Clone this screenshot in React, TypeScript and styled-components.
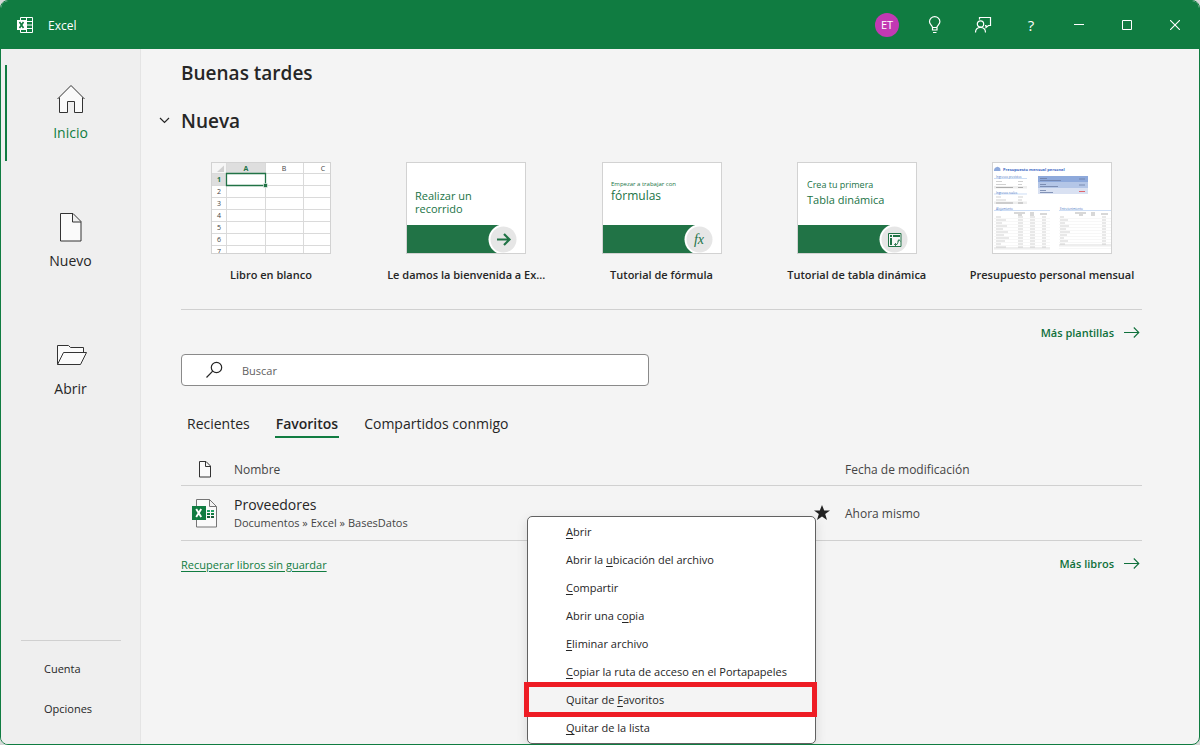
import React from "react";
import styled, { createGlobalStyle } from "styled-components";

const GlobalStyle = createGlobalStyle`
  *, *::before, *::after { box-sizing: border-box; }
  body { margin: 0; background: #d6d9d8; }
  body, button, input { font-family: "Open Sans", "Noto Sans", sans-serif; font-size: 11px; color: #262626; }
  button { border: 0; padding: 0; background: none; cursor: pointer; }
  svg { display: block; flex: none; }
`;

const green = "#107c41";
const rule = "#d0d0d0";

const Window = styled.div`
  display: flex;
  flex-direction: column;
  min-height: 100vh;
  border: 1px solid ${green};
  border-radius: 8px;
  background: #f4f4f4;
  overflow: hidden;
`;

const TitleBar = styled.header`
  display: flex;
  align-items: center;
  justify-content: space-between;
  height: 48px;
  padding-left: 16px;
  background: ${green};
  color: #fff;
  font-size: 12px;
`;

const AppName = styled.div`
  display: flex;
  align-items: center;
  gap: 15px;
`;

const TitleActions = styled.div`
  display: flex;
`;

const TitleButton = styled.button`
  display: flex;
  align-items: center;
  justify-content: center;
  width: 48px;
  height: 48px;
  color: #fff;
  font-size: 15px;
`;

const Avatar = styled.span`
  width: 24px;
  border-radius: 50%;
  background: #c239b3;
  font-size: 11px;
  line-height: 24px;
`;

const Body = styled.div`
  display: flex;
  flex: 1;
`;

const Sidebar = styled.nav`
  display: flex;
  flex-direction: column;
  justify-content: space-between;
  flex: none;
  width: 140px;
  padding: 16px 0;
  border-right: 1px solid #e4e4e4;
  background: #efefef;
`;

const NavGroup = styled.div`
  display: flex;
  flex-direction: column;
  gap: 32px;
  padding-left: 4px;
`;

const NavItem = styled.button<{ $active?: boolean }>`
  display: flex;
  flex-direction: column;
  align-items: center;
  gap: 8px;
  height: 96px;
  padding: 18px 6px 18px 0;
  border-left: 2px solid ${(p) => (p.$active ? green : "transparent")};
  color: ${(p) => (p.$active ? green : "#262626")};
  font-size: 14px;
  line-height: 20px;
`;

const FooterNav = styled.div`
  display: flex;
  flex-direction: column;
  margin: 0 19px 0 20px;
  padding-top: 7px;
  border-top: 1px solid ${rule};
`;

const FooterItem = styled.button`
  height: 40px;
  padding-left: 23px;
  text-align: left;
`;

const Main = styled.main`
  flex: 1;
  min-width: 0;
  padding: 8px 57px 0 40px;
`;

const Greeting = styled.h1`
  margin: 0;
  font-size: 19px;
  font-weight: 600;
  line-height: 32px;
`;

const SectionHead = styled.div`
  display: flex;
  align-items: center;
  gap: 10px;
  margin: 16px 0 0 -22px;
`;

const SectionTitle = styled.h2`
  margin: 0;
  font-size: 19px;
  font-weight: 600;
  line-height: 32px;
`;

const IconButton = styled.button`
  display: flex;
`;

const Templates = styled.div`
  display: flex;
  justify-content: space-between;
  padding: 25px 0;
  border-bottom: 1px solid ${rule};
`;

const TemplateCard = styled.button`
  display: flex;
  flex-direction: column;
  align-items: center;
  gap: 11px;
  width: 180px;
  height: 122px;
`;

const TemplateName = styled.span`
  font-weight: 600;
  line-height: 20px;
  white-space: nowrap;
`;

const Thumb = styled.svg`
  width: 120px;
  height: 92px;
  border: 1px solid #d2d2d2;
  background: #fff;
`;

const MoreLink = styled.a`
  display: flex;
  align-items: center;
  gap: 10px;
  color: #0f703b;
  font-weight: 600;
  line-height: 20px;
  text-decoration: none;
`;

const LinkRow = styled.div`
  display: flex;
  align-items: center;
  justify-content: flex-end;
  padding: 13px 2px 11px 0;
`;

const FooterRow = styled(LinkRow)`
  justify-content: space-between;
`;

const PlainLink = styled.a`
  color: ${green};
  text-underline-offset: 2px;
`;

const SearchBox = styled.label`
  display: flex;
  align-items: center;
  gap: 18px;
  width: 468px;
  max-width: 100%;
  height: 32px;
  padding: 0 24px;
  border: 1px solid #8a8a8a;
  border-radius: 4px;
  background: #fff;
`;

const SearchInput = styled.input`
  flex: 1;
  min-width: 0;
  padding: 0;
  border: 0;
  outline: 0;
  background: none;
  &::placeholder { color: #616161; opacity: 1; }
`;

const Tabs = styled.div`
  display: flex;
  gap: 24px;
  padding: 26px 0 14px 5px;
`;

const Tab = styled.button<{ $active?: boolean }>`
  height: 26px;
  padding: 0 1px;
  border-bottom: 2px solid ${(p) => (p.$active ? green : "transparent")};
  font-size: 14px;
  font-weight: ${(p) => (p.$active ? 600 : 400)};
  line-height: 24px;
`;

const ListArea = styled.div`
  position: relative;
`;

const FileTable = styled.table`
  width: 100%;
  table-layout: fixed;
  border-collapse: separate;
  border-spacing: 0;
`;

const HeadCell = styled.th<{ $width?: number }>`
  width: ${(p) => (p.$width ? p.$width + "px" : "auto")};
  height: 34px;
  padding: 2px 0 0;
  border-bottom: 1px solid ${rule};
  color: #444;
  font-size: 12px;
  font-weight: 400;
  text-align: left;
`;

const Cell = styled.td`
  height: 55px;
  padding: 0;
  border-bottom: 1px solid ${rule};
  color: #444;
  font-size: 12px;
`;

const NameCell = styled(Cell)`
  padding-top: 2px;
`;

const IconSlot = styled.span<{ $inset: number }>`
  display: block;
  padding-left: ${(p) => p.$inset}px;
`;

const FileName = styled.div`
  color: #262626;
  font-size: 14px;
  line-height: 18px;
`;

const FilePath = styled.div`
  font-size: 11px;
  line-height: 18px;
`;

const Menu = styled.div`
  position: absolute;
  top: 64px;
  left: 36%;
  display: flex;
  flex-direction: column;
  width: 289px;
  padding: 1px 0;
  border: 1px solid #616161;
  border-radius: 5px;
  background: #fff;
  box-shadow: 0 4px 12px rgba(0, 0, 0, 0.12);
`;

const MenuItem = styled.button<{ $marked?: boolean }>`
  position: relative;
  height: 28px;
  padding: 0 0 1px 38px;
  background: ${(p) => (p.$marked ? "#f4f4f4" : "transparent")};
  text-align: left;
  white-space: nowrap;
  u { text-underline-offset: 2px; }
  &::after {
    content: "";
    display: ${(p) => (p.$marked ? "block" : "none")};
    position: absolute;
    inset: -4px -2px -3px -4px;
    border: 5px solid #ee1c24;
  }
`;

const ExcelLogo = () => (
  <svg width="16" height="16" viewBox="0 0 16 16">
    <path d="M3.5 3V.5h12v15h-12V13M4 4.500h11.500M4 8h11.500M4 11.500h11.500M9.500.5v15" fill="none" stroke="#fff" />
    <path d="M0 3h9v10H0z" fill="#fff" />
    <path d="M2.500 5l4 6M6.500 5l-4 6" stroke={green} strokeWidth="1.600" />
  </svg>
);

const stroke = { fill: "none", stroke: "currentColor" };

const Bulb = () => (
  <svg width="14" height="18" viewBox="0 0 14 18" {...stroke} strokeWidth="1.200">
    <path d="M4.500 11.500C4.500 9.500 1.500 8.500 1.500 5.800a5.200 5.200 0 0 1 10.400 0c0 2.700-3 3.700-3 5.700zM4.500 11.500v2.500h4.500v-2.500M5 16.500h3.500" />
  </svg>
);

const Feedback = () => (
  <svg width="18" height="18" viewBox="0 0 18 18" {...stroke} strokeWidth="1.200">
    <path d="M5.500 3.500v-2h11v8h-2l-2.500 2v-2h-1" />
    <circle cx="6.500" cy="8" r="3.200" />
    <path d="M1.500 16.500c0-3 2-5.200 5-5.200s5 2.200 5 5.200" />
  </svg>
);

const HomeIcon = () => (
  <svg width="32" height="32" viewBox="0 0 32 32" fill="#fafafa" stroke="#333" strokeWidth="1">
    <path d="M4.500 14v15.500h8v-11h7v11h8V14L16 3z" stroke="none" />
    <path d="M2.500 16L16 2.500 29.500 16M4.500 14.500v15h8v-11h7v11h8v-15" fill="none" />
  </svg>
);

const PageIcon = () => (
  <svg width="32" height="32" viewBox="0 0 32 32" fill="#fafafa" stroke="#333" strokeWidth="1">
    <path d="M5.500 2.500h12.500l8 8v19.500H5.500zM17.500 2.500v8.500H26" />
  </svg>
);

const FolderIcon = () => (
  <svg width="32" height="32" viewBox="0 0 32 32" fill="#fafafa" stroke="#333" strokeWidth="1">
    <path d="M2.500 25.500v-19h11l2 2h13v5" />
    <path d="M2.500 25.500l6-12h23l-6 12z" />
  </svg>
);

const SmallPage = () => (
  <svg width="14" height="17" viewBox="0 0 14 17" fill="#fafafa" stroke="#333">
    <path d="M1.500.5h6.500l4.500 4.500v11h-11zM7.500.5v5h5" />
  </svg>
);

const ExcelFile = () => (
  <svg width="26" height="29" viewBox="0 0 26 29">
    <path d="M4.500.5h13l7 7v20.500h-20zM17.500.5v7h7" fill="#fafafa" stroke="#757575" />
    <path d="M0 7h14v14H0z" fill={green} />
    <path d="M4.200 10l5 8M9.200 10l-5 8" stroke="#fff" strokeWidth="1.900" />
    <path d="M15 11h3v2h-3zM19 11h3v2h-3z" fill="#21a366" />
    <path d="M15 14h3v2h-3zM19 14h3v2h-3z" fill={green} />
    <path d="M15 17h3v2h-3zM19 17h3v2h-3z" fill="#185c37" />
  </svg>
);

const Star = () => (
  <svg width="16" height="16" viewBox="0 0 16 16" fill="#222">
    <path d="M8 0l2.200 5.500H16l-4.800 3.600L13 15l-5-3.600L3 15l1.800-5.900L0 5.500h5.800z" />
  </svg>
);

const SearchIcon = () => (
  <svg width="18" height="18" viewBox="0 0 18 18" {...stroke} strokeWidth="1.200">
    <circle cx="10.500" cy="6.500" r="5.200" />
    <path d="M6.700 10.200L.5 16.500" />
  </svg>
);

const Arrow = () => (
  <svg width="16" height="12" viewBox="0 0 16 12" {...stroke} strokeWidth="1.100">
    <path d="M0 5.500h15M9.800.5l5 5-5 5" />
  </svg>
);

const ink = "#217346";

const BlankThumb = () => (
  <Thumb viewBox="0 0 118 90">
    <path d="M0 0h15v10H0z" fill="#f6f6f6" />
    <path d="M12 2.500V9H5z" fill="#d0d0d0" />
    <path d="M15 0h38v10H15zM0 10h14v12H0z" fill="#dedede" />
    <path d="M14.500 0v90M53.500 0v90M91.500 0v90M0 10.500h118M0 22.500h118M0 34.500h118M0 46.500h118M0 58.500h118M0 70.500h118M0 82.500h118" stroke="#dadada" />
    <path d="M14.500 10.500h39v12h-39z" fill="#fff" stroke={ink} strokeWidth="1.300" />
    <path d="M51.500 20.500h4v4h-4z" fill={ink} stroke="#fff" strokeWidth=".6" />
    <g fontSize="7" textAnchor="middle" fill="#444">
      <text x="34" y="7.500" fill={ink} fontWeight="700">A</text>
      <text x="72" y="7.500">B</text>
      <text x="111" y="7.500">C</text>
      <text x="7" y="19" fill={ink} fontWeight="700">1</text>
      {[2, 3, 4, 5, 6, 7].map((n) => (
        <text key={n} x="7" y={19 + (n - 1) * 12}>{n}</text>
      ))}
    </g>
  </Thumb>
);

const TourBase = ({ children }: { children: React.ReactNode }) => (
  <Thumb viewBox="0 0 118 90" fill={ink}>
    <path d="M0 62h92v28H0z" />
    <circle cx="96.500" cy="76.500" r="15" fill="#fff" />
    <circle cx="96.500" cy="76.500" r="13" fill="#e6e6e6" />
    {children}
  </Thumb>
);

const TourThumb = () => (
  <TourBase>
    <text x="8" y="37" fontSize="11">Realizar un</text>
    <text x="8" y="50" fontSize="11">recorrido</text>
    <path d="M90 76.500h12M97 71l5.500 5.500L97 82" fill="none" stroke={ink} strokeWidth="2.200" />
  </TourBase>
);

const FormulaThumb = () => (
  <TourBase>
    <text x="8" y="23" fontSize="6">Empezar a trabajar con</text>
    <text x="8" y="37" fontSize="12">fórmulas</text>
    <text x="96" y="81" fontSize="14" fontStyle="italic" fontFamily="Liberation Serif, serif" textAnchor="middle">fx</text>
  </TourBase>
);

const PivotThumb = () => (
  <TourBase>
    <text x="9" y="25" fontSize="9">Crea tu primera</text>
    <text x="9" y="41" fontSize="11">Tabla dinámica</text>
    <path d="M90.500 70.500h12.500v13H90.500z" fill="#f6f6f6" stroke={ink} />
    <path d="M92 72h2v2h-2zM95 72h7v2h-7zM92 75h2v7h-2z" />
    <path d="M96.500 81.500h2.500l2-4.500M96.500 81.500l1.500-1.500M96.500 81.500l1.500 1.500M99.500 78.500l1.500-2 1.500 2" fill="none" stroke={ink} strokeWidth=".9" />
  </TourBase>
);

const budgetRows = Array.from({ length: 11 }, (_, i) => 54 + i * 3);

const BudgetThumb = () => (
  <Thumb viewBox="0 0 118 90">
    <path d="M1 8c0-3 1.500-3.500 2-3.500.5-1 2.500-1 3 0 1 0 1.500 1 1.500 3.500z" fill="#8faadc" />
    <text x="10" y="8" fontSize="4" fontWeight="700" fill="#3f6ac4">Presupuesto mensual personal</text>
    <path d="M45 13h50v6H45z" fill="#8ea9db" />
    <path d="M45 19h50v6H45z" fill="#b4c6e7" />
    <path d="M45 25h50v6H45z" fill="#d9e1f2" />
    <path d="M47 15.500h7M47 17.500h21M47 21.500h6M47 23.500h18M47 27.500h6M47 29.500h13M86 16h6M86 22h6" stroke="#6d7fa6" strokeWidth=".8" />
    <path d="M86 28.500h6" stroke="#e0666c" />
    <path d="M1 23h33v2.500H1zM1 38.500h33v2.500H1zM1 84h56v2.500H1zM66 81h52v2.500H66z" fill="#eee" />
    <path d="M1 15.500h33M1 31h33M1 47.500h56M66 47.500h52" stroke="#b9d0f0" strokeWidth=".7" />
    <g fontSize="3" fill="#4472c4">
      <text x="3" y="15">Ingresos previstos</text>
      <text x="3" y="30.500">Ingresos reales</text>
      <text x="3" y="47">Alojamiento</text>
      <text x="67" y="47">Entretenimiento</text>
    </g>
    <g stroke="#bdbdbd" strokeWidth=".7">
      <path d="M3 18.500h6M25 18.500h5M3 21.500h10M25 21.500h4M3 34h5M25 34h5M3 37h10M25 37h4" />
      <path d="M3 24.500h17M25 24.500h5M3 40h17M25 40h5M21 50h11M25 52h4M37 50h4M37 52h4M47 51h7M82 50h11M86 52h4M98 50h4M98 52h4M108 51h7" stroke="#8f8f8f" />
      {budgetRows.map((y, i) => (
        <path key={y} d={`M3 ${y}h${5 + ((i * 5) % 9)}M25 ${y}h5M37 ${y}h5M49 ${y}h4`} />
      ))}
      {budgetRows.slice(0, 10).map((y, i) => (
        <path key={y} d={`M67 ${y}h${4 + ((i * 4) % 7)}M109 ${y}h4`} />
      ))}
    </g>
    <g stroke="#eee" strokeWidth=".5">
      {budgetRows.map((y) => (
        <path key={y} d={`M1 ${y + 1.5}h56M66 ${y + 1.5}h52`} />
      ))}
    </g>
  </Thumb>
);

const templates = [
  { name: "Libro en blanco", art: <BlankThumb /> },
  { name: "Le damos la bienvenida a Ex...", art: <TourThumb /> },
  { name: "Tutorial de fórmula", art: <FormulaThumb /> },
  { name: "Tutorial de tabla dinámica", art: <PivotThumb /> },
  { name: "Presupuesto personal mensual", art: <BudgetThumb /> },
];

// Each entry is split around its underlined access key.
const menuItems = [
  ["", "A", "brir"],
  ["Abrir la ", "u", "bicación del archivo"],
  ["", "C", "ompartir"],
  ["Abrir una c", "o", "pia"],
  ["", "E", "liminar archivo"],
  ["", "C", "opiar la ruta de acceso en el Portapapeles"],
  ["Quitar de ", "F", "avoritos"],
  ["", "Q", "uitar de la lista"],
];

export default function App() {
  return (
    <>
      <GlobalStyle />
      <Window>
        <TitleBar>
          <AppName>
            <ExcelLogo />
            <span>Excel</span>
          </AppName>
          <TitleActions>
            <TitleButton aria-label="Cuenta de ET"><Avatar>ET</Avatar></TitleButton>
            <TitleButton aria-label="Sugerencias"><Bulb /></TitleButton>
            <TitleButton aria-label="Comentarios"><Feedback /></TitleButton>
            <TitleButton aria-label="Ayuda">?</TitleButton>
            <TitleButton aria-label="Minimizar">
              <svg width="10" height="10" {...stroke}><path d="M0 4.500h10" /></svg>
            </TitleButton>
            <TitleButton aria-label="Maximizar">
              <svg width="10" height="10" {...stroke}><path d="M.5.5h9v9h-9z" /></svg>
            </TitleButton>
            <TitleButton aria-label="Cerrar">
              <svg width="10" height="10" {...stroke} strokeWidth="1.100"><path d="M0 0l10 10M10 0L0 10" /></svg>
            </TitleButton>
          </TitleActions>
        </TitleBar>
        <Body>
          <Sidebar>
            <NavGroup>
              <NavItem $active><HomeIcon />Inicio</NavItem>
              <NavItem><PageIcon />Nuevo</NavItem>
              <NavItem><FolderIcon />Abrir</NavItem>
            </NavGroup>
            <FooterNav>
              <FooterItem>Cuenta</FooterItem>
              <FooterItem>Opciones</FooterItem>
            </FooterNav>
          </Sidebar>
          <Main>
            <Greeting>Buenas tardes</Greeting>
            <SectionHead>
              <IconButton aria-label="Contraer">
                <svg width="12" height="8" {...stroke} strokeWidth="1.200"><path d="M1 1l4.500 4.500L10 1" /></svg>
              </IconButton>
              <SectionTitle>Nueva</SectionTitle>
            </SectionHead>
            <Templates>
              {templates.map((t) => (
                <TemplateCard key={t.name}>
                  {t.art}
                  <TemplateName>{t.name}</TemplateName>
                </TemplateCard>
              ))}
            </Templates>
            <LinkRow>
              <MoreLink href="#plantillas">Más plantillas<Arrow /></MoreLink>
            </LinkRow>
            <SearchBox>
              <SearchIcon />
              <SearchInput type="search" placeholder="Buscar" aria-label="Buscar" />
            </SearchBox>
            <Tabs role="tablist">
              <Tab role="tab">Recientes</Tab>
              <Tab role="tab" $active aria-selected>Favoritos</Tab>
              <Tab role="tab">Compartidos conmigo</Tab>
            </Tabs>
            <ListArea>
              <FileTable>
                <thead>
                  <tr>
                    <HeadCell $width={53}><IconSlot $inset={17}><SmallPage /></IconSlot></HeadCell>
                    <HeadCell>Nombre</HeadCell>
                    <HeadCell $width={31} aria-label="Favorito" />
                    <HeadCell $width={297}>Fecha de modificación</HeadCell>
                  </tr>
                </thead>
                <tbody>
                  <tr>
                    <Cell><IconSlot $inset={11}><ExcelFile /></IconSlot></Cell>
                    <NameCell>
                      <FileName>Proveedores</FileName>
                      <FilePath>Documentos » Excel » BasesDatos</FilePath>
                    </NameCell>
                    <Cell><Star /></Cell>
                    <Cell>Ahora mismo</Cell>
                  </tr>
                </tbody>
              </FileTable>
              <Menu role="menu">
                {menuItems.map(([before, key, after], i) => (
                  <MenuItem key={i} role="menuitem" $marked={i === 6}>
                    {before}<u>{key}</u>{after}
                  </MenuItem>
                ))}
              </Menu>
            </ListArea>
            <FooterRow>
              <PlainLink href="#recuperar">Recuperar libros sin guardar</PlainLink>
              <MoreLink href="#libros">Más libros<Arrow /></MoreLink>
            </FooterRow>
          </Main>
        </Body>
      </Window>
    </>
  );
}
